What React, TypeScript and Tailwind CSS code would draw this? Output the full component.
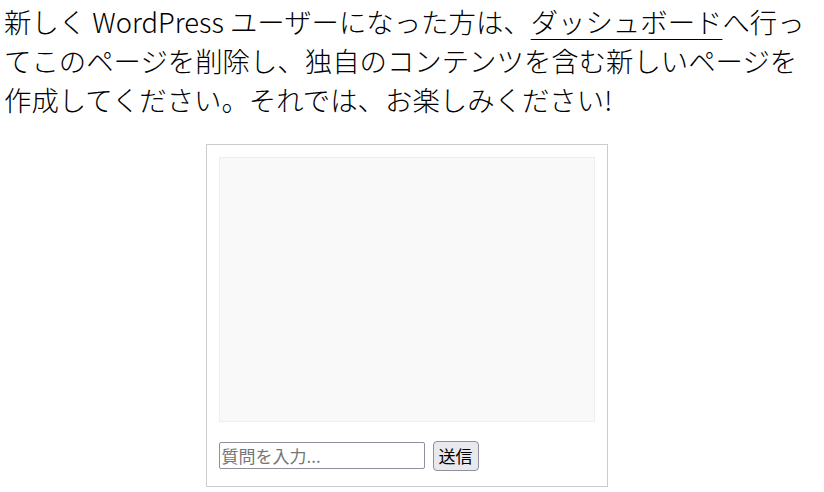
export default function App() {
  return (
    <div className="w-[805px] ml-[4px] bg-white text-black" style={{ fontFamily: '"Noto Sans CJK JP", "Noto Sans", sans-serif' }}>
      <p className="w-[816px] text-[27.4px] leading-[39px] font-light pt-[2px]">
        新しく WordPress ユーザーになった方は、<a href="#" className="underline underline-offset-[6px] decoration-1">ダッシュボード</a>へ行ってこのページを削除し、独自のコンテンツを含む新しいページを作成してください。それでは、お楽しみください!
      </p>
      <div className="mx-auto mt-[25px] w-[402px] border border-[#cccccc] px-[12px] pt-[12px] pb-[15px]">
        <div className="h-[265px] border border-[#eeeeee] bg-[#f9f9f9]"></div>
        <div className="mt-[19px] flex items-start gap-[8px]">
          <input
            type="text"
            placeholder="質問を入力..."
            className="mt-[1px] h-[27px] w-[206px] rounded-[2px] border border-[#8f8f9d] px-[2px] text-[17px] placeholder:text-[#757575]"
          />
          <button className="h-[30px] w-[46px] rounded-[4px] border border-[#8f8f9d] bg-[#e9e9ed] text-[17px]">
            送信
          </button>
        </div>
      </div>
    </div>
  );
}
